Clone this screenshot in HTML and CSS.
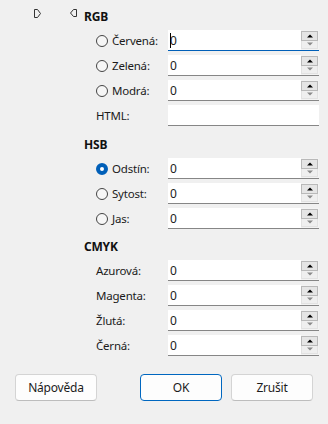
FILE: index.html
```html
<!DOCTYPE html>
<html lang="cs">
<head>
  <meta charset="UTF-8">
  <title>Barvy</title>
  <link rel="stylesheet" href="styles.css">
</head>
<body>
  <div class="dialog">
    <!-- RGB -->
    <div class="section-head first">
      <svg class="tab-glyph left" width="7" height="9" viewBox="0 0 7 9">
        <path d="M0.5 0.5 H3.5 L6.5 4.5 L3.5 8.5 H0.5 Z" fill="none" stroke="#333" stroke-width="1"/>
      </svg>
      <svg class="tab-glyph right" width="7" height="8" viewBox="0 0 7 8">
        <path d="M6.5 0.5 H3.5 L0.5 4 L3.5 7.5 H6.5 Z" fill="none" stroke="#333" stroke-width="1"/>
      </svg>
      <span class="section-title">RGB</span>
    </div>
    <div class="row">
      <label class="radio"><span class="dot"></span>Červená:</label>
      <div class="field focused"><span class="value"><span class="caret"></span>0</span><span class="spin"><span class="up"></span><span class="down"></span></span></div>
    </div>
    <div class="row">
      <label class="radio"><span class="dot"></span>Zelená:</label>
      <div class="field"><span class="value">0</span><span class="spin"><span class="up"></span><span class="down"></span></span></div>
    </div>
    <div class="row">
      <label class="radio"><span class="dot"></span>Modrá:</label>
      <div class="field"><span class="value">0</span><span class="spin"><span class="up"></span><span class="down"></span></span></div>
    </div>
    <div class="row">
      <label>HTML:</label>
      <div class="field"><span class="value"></span></div>
    </div>

    <!-- HSB -->
    <div class="section-head"><span class="section-title">HSB</span></div>
    <div class="row">
      <label class="radio"><span class="dot checked"></span>Odstín:</label>
      <div class="field"><span class="value">0</span><span class="spin"><span class="up"></span><span class="down"></span></span></div>
    </div>
    <div class="row">
      <label class="radio"><span class="dot"></span>Sytost:</label>
      <div class="field"><span class="value">0</span><span class="spin"><span class="up"></span><span class="down"></span></span></div>
    </div>
    <div class="row">
      <label class="radio"><span class="dot"></span>Jas:</label>
      <div class="field"><span class="value">0</span><span class="spin"><span class="up"></span><span class="down"></span></span></div>
    </div>

    <!-- CMYK -->
    <div class="section-head cmyk"><span class="section-title">CMYK</span></div>
    <div class="row">
      <label>Azurová:</label>
      <div class="field"><span class="value">0</span><span class="spin"><span class="up"></span><span class="down"></span></span></div>
    </div>
    <div class="row">
      <label>Magenta:</label>
      <div class="field"><span class="value">0</span><span class="spin"><span class="up"></span><span class="down"></span></span></div>
    </div>
    <div class="row">
      <label>Žlutá:</label>
      <div class="field"><span class="value">0</span><span class="spin"><span class="up"></span><span class="down"></span></span></div>
    </div>
    <div class="row">
      <label>Černá:</label>
      <div class="field"><span class="value">0</span><span class="spin"><span class="up"></span><span class="down"></span></span></div>
    </div>

    <!-- Buttons -->
    <div class="buttons">
      <button class="btn">Nápověda</button>
      <div class="btn-group">
        <button class="btn primary">OK</button>
        <button class="btn">Zrušit</button>
      </div>
    </div>
  </div>
</body>
</html>
```

FILE: styles.css
```css
/* Page */
body {
  margin: 0;
  background: #f0f0f0;
  font-family: "Noto Sans", "Liberation Sans", sans-serif;
  font-size: 11.5px;
  letter-spacing: -0.2px;
  color: #1b1b1b;
}

.dialog {
  width: 328px;
  padding-top: 6px;
}

/* Section headers */
.section-head {
  display: flex;
  align-items: center;
  height: 20px;
  margin: 8px 0 4px 84px;
}

.section-head.first {
  margin-top: 0;
  margin-left: 34px;
}

.section-head.cmyk {
  margin-top: 7px;
}

.tab-glyph.left {
  margin-top: -6px;
}

.tab-glyph.right {
  margin-left: 29px;
  margin-top: -6px;
}

.section-title {
  font-weight: bold;
  font-size: 12px;
  color: #111;
}

.tab-glyph.right + .section-title {
  margin-left: 7px;
}

/* Rows */
.row {
  display: grid;
  grid-template-columns: 72px 151px;
  align-items: center;
  height: 21px;
  margin: 0 0 4px 96px;
}

.row label {
  display: flex;
  align-items: center;
  white-space: nowrap;
}

.dot {
  width: 10px;
  height: 10px;
  border: 1px solid #444;
  border-radius: 50%;
  margin-right: 4px;
  background: #f6f6f6;
  box-sizing: content-box;
}

.dot.checked {
  width: 4px;
  height: 4px;
  border: 4px solid #005fb8;
  background: #fff;
}

/* Fields */
.field {
  display: flex;
  height: 20px;
  background: #fff;
  border-bottom: 1px solid #868686;
}

.field.focused {
  border-bottom-color: #005fb8;
}

.value {
  flex: 1;
  display: flex;
  align-items: center;
  padding-left: 2px;
  position: relative;
  font-size: 12px;
  color: #222;
}

.caret {
  position: absolute;
  left: 2px;
  top: 3px;
  width: 1px;
  height: 15px;
  background: #000;
}

.spin {
  width: 17px;
  background: #f3f3f3;
  display: flex;
  flex-direction: column;
  padding: 1px 1px 1px 0;
}

.spin span {
  flex: 1;
  position: relative;
}

.spin .up {
  background: #e5e5e5;
  border: 1px solid #b9b9b9;
}

.spin .down {
  background: #efefef;
  border: 1px solid #e2e2e2;
  border-top: none;
}

.spin .up::after,
.spin .down::after {
  content: "";
  position: absolute;
  left: 50%;
  top: 50%;
  transform: translate(-50%, -50%);
  border-left: 3px solid transparent;
  border-right: 3px solid transparent;
}

.spin .up::after {
  border-bottom: 3px solid #000;
}

.spin .down::after {
  border-top: 3px solid #8a8a8a;
}

/* Buttons */
.buttons {
  display: flex;
  justify-content: space-between;
  padding: 0 15px;
  margin-top: 18px;
}

.btn-group {
  display: flex;
  gap: 9px;
}

.btn {
  width: 82px;
  height: 27px;
  font-family: inherit;
  font-size: 12px;
  letter-spacing: -0.2px;
  color: #1b1b1b;
  background: #fdfdfd;
  border: 1px solid #d4d4d4;
  border-bottom-color: #bdbdbd;
  border-radius: 4px;
}

.btn.primary {
  border: 1px solid #0067c0;
}
```
